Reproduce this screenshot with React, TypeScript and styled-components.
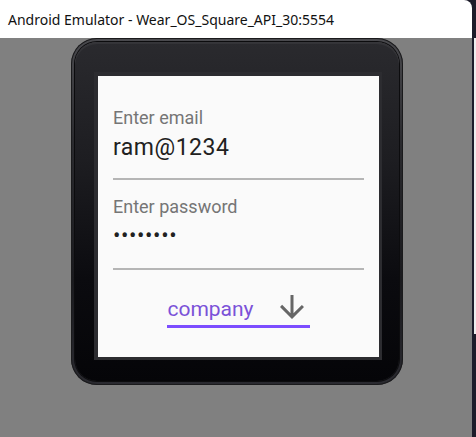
import React from "react";
import styled, { createGlobalStyle } from "styled-components";

const Global = createGlobalStyle`
  html, body { margin: 0; padding: 0; background: #1d1c2a; }
  body { width: 476px; height: 437px; overflow: hidden; }
  #root { width: 476px; height: 437px; }
`;

const Page = styled.div`
  display: flex;
  width: 476px;
  height: 437px;
`;

const Window = styled.div`
  width: 472px;
  height: 437px;
  display: flex;
  flex-direction: column;
`;

const TitleBar = styled.div`
  height: 38px;
  flex: none;
  background: #ffffff;
  border-top-right-radius: 8px;
  display: flex;
  align-items: center;
  padding-left: 8px;
  font-family: "Noto Sans", "Open Sans", sans-serif;
  font-size: 14px;
  color: #111;
`;

const Stage = styled.div`
  flex: 1;
  background: #808080;
  display: flex;
  justify-content: center;
  align-items: flex-start;
  padding-left: 2px;
`;

const SideStrip = styled.div`
  margin-top: 38px;
  margin-left: 2px;
  width: 2px;
  height: 296px;
  background: #eeeeee;
`;

const Bezel = styled.div`
  width: 332px;
  height: 347px;
  box-sizing: border-box;
  border-radius: 26px;
  padding: 4px;
  background: linear-gradient(180deg, #4a4a4e 0%, #2a2a2e 30%, #1a1a1e 70%, #2a2a30 100%);
  box-shadow: inset 0 0 0 1px #1a1a1c;
`;

const Face = styled.div`
  height: 100%;
  box-sizing: border-box;
  border-radius: 22px;
  padding: 30px 17px 21px 19px;
  background: linear-gradient(180deg, #2a2a2e 0%, #1d1d21 35%, #0b0b0f 70%, #050508 100%);
  box-shadow: inset 0 2px 1px rgba(255,255,255,0.06), 0 0 0 1px #0c0c0e;
`;

const ScreenFrame = styled.div`
  border-style: solid;
  border-color: #2c2c30;
  border-width: 4px 3px 3px 4px;
`;

const Screen = styled.div`
  height: 281px;
  box-sizing: border-box;
  background: #fafafa;
  padding: 31px 15px 0 15px;
  display: flex;
  flex-direction: column;
  font-family: Roboto, "Noto Sans", sans-serif;
`;

const Label = styled.div<{ $gap?: number }>`
  font-size: 18px;
  line-height: 21px;
  color: #757575;
  margin-top: ${(p) => p.$gap ?? 0}px;
`;

const Input = styled.div<{ $gap: number; $pad: number; $dots?: boolean }>`
  margin-top: ${(p) => p.$gap}px;
  padding-bottom: ${(p) => p.$pad}px;
  border-bottom: 2px solid #b5b5b5;
  font-size: ${(p) => (p.$dots ? 22 : 23)}px;
  line-height: 26px;
  color: #212121;
  letter-spacing: ${(p) => (p.$dots ? "0.6px" : "0.5px")};
`;

const SpinnerRow = styled.div`
  margin-top: 19px;
  align-self: center;
  display: flex;
  align-items: center;
  gap: 20px;
  height: 36px;
  border-bottom: 3px solid #7c4dff;
`;

const SpinnerText = styled.div`
  font-size: 21px;
  line-height: 24px;
  padding-top: 4px;
  color: #7b52d8;
`;

const Arrow = styled.svg`
  width: 36px;
  height: 36px;
  display: block;
`;

export default function App() {
  return (
    <>
      <Global />
      <Page>
        <Window>
          <TitleBar>Android Emulator - Wear_OS_Square_API_30:5554</TitleBar>
          <Stage>
            <Bezel>
              <Face>
                <ScreenFrame>
                  <Screen>
                    <Label>Enter email</Label>
                    <Input $gap={7} $pad={17}>ram@1234</Input>
                    <Label $gap={16}>Enter password</Label>
                    <Input $gap={6} $pad={19} $dots>••••••••</Input>
                    <SpinnerRow>
                      <SpinnerText>company</SpinnerText>
                      <Arrow viewBox="0 0 24 24">
                        <path
                          fill="#666666"
                          d="M20 12l-1.41-1.41L13 16.17V4h-2v12.17l-5.58-5.59L4 12l8 8 8-8z"
                        />
                      </Arrow>
                    </SpinnerRow>
                  </Screen>
                </ScreenFrame>
              </Face>
            </Bezel>
          </Stage>
        </Window>
        <SideStrip />
      </Page>
    </>
  );
}
